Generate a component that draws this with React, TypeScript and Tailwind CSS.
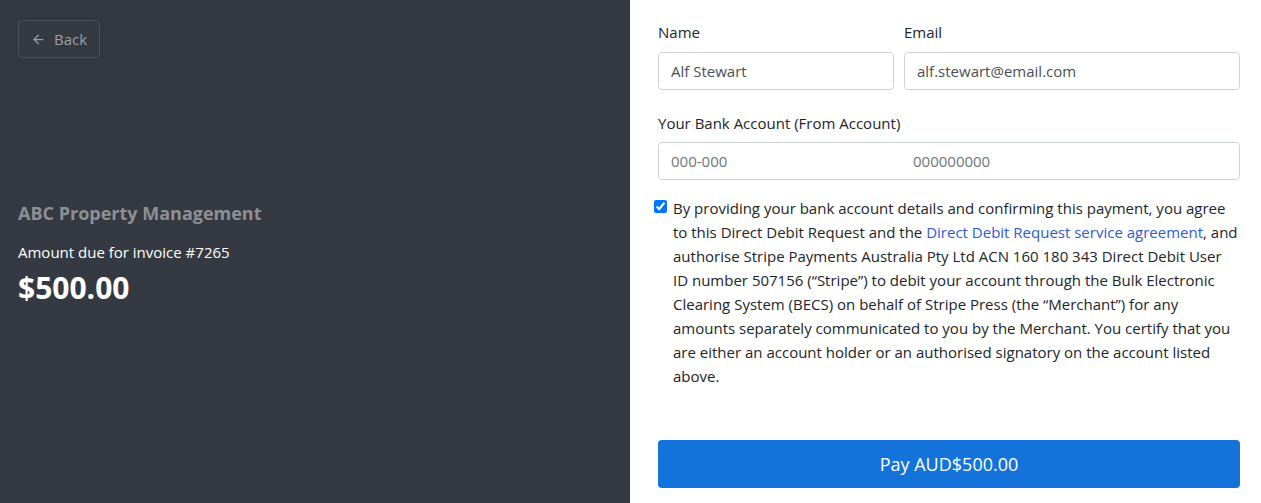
import { ArrowLeft } from 'lucide-react'

export default function App() {
  return (
    <div className="flex h-[503px] w-full overflow-hidden font-['Open_Sans',sans-serif] text-[#212529]">
      <div className="flex w-[630px] shrink-0 flex-col bg-[#353a42] px-[18px] pt-5">
        <div>
          <button className="flex h-[38px] items-center gap-2 rounded border border-[#4a4f57] px-3 text-[15px] text-[#9ca0a6] shadow-[0_0_12px_rgba(0,0,0,0.12)]">
            <ArrowLeft size={15} strokeWidth={2} />
            Back
          </button>
        </div>
        <div className="mt-[142px] text-[18px] font-bold text-[#8d9095]">ABC Property Management</div>
        <div className="mt-[14px] text-[15px] text-white">Amount due for invoice #7265</div>
        <div className="mt-1 text-[30px] font-bold leading-10 text-white">$500.00</div>
      </div>

      <div className="flex flex-1 flex-col bg-white pl-7 pr-[21px] pt-5">
        <div className="grid grid-cols-[236px_1fr] gap-x-[10px]">
          <label className="text-[15px] leading-[24px]">Name</label>
          <label className="text-[15px] leading-[24px]">Email</label>
          <input
            className="mt-2 h-[38px] rounded border border-[#ced4da] px-3 text-[15px] text-[#495057] outline-none"
            defaultValue="Alf Stewart"
          />
          <input
            className="mt-2 h-[38px] rounded border border-[#ced4da] px-3 text-[15px] text-[#495057] outline-none"
            defaultValue="alf.stewart@email.com"
          />
        </div>

        <label className="mt-[21px] text-[15px] leading-[24px]">Your Bank Account (From Account)</label>
        <div className="mt-[7px] flex h-[38px] items-center rounded border border-[#ced4da] px-3 text-[15px] text-[#6c757d]">
          <span className="w-[242px]">000-000</span>
          <span>000000000</span>
        </div>

        <div className="-ml-1 mt-4 flex gap-[6px]">
          <input type="checkbox" defaultChecked className="mt-[4px] h-[13px] w-[13px] shrink-0 accent-[#0075ff]" />
          <p className="text-[15px] leading-[24px] text-[#212529]">
            By providing your bank account details and confirming this payment, you agree to this Direct Debit Request and the{' '}
            <a className="text-[#2d5bd6]">Direct Debit Request service agreement</a>, and authorise Stripe Payments Australia Pty Ltd ACN 160 180 343 Direct Debit User ID number 507156 (“Stripe”) to debit your account through the Bulk Electronic Clearing System (BECS) on behalf of Stripe Press (the “Merchant”) for any amounts separately communicated to you by the Merchant. You certify that you are either an account holder or an authorised signatory on the account listed above.
          </p>
        </div>

        <button className="mt-[52px] h-[48px] w-full rounded bg-[#1473db] text-[18px] text-white">Pay AUD$500.00</button>
      </div>
    </div>
  )
}
